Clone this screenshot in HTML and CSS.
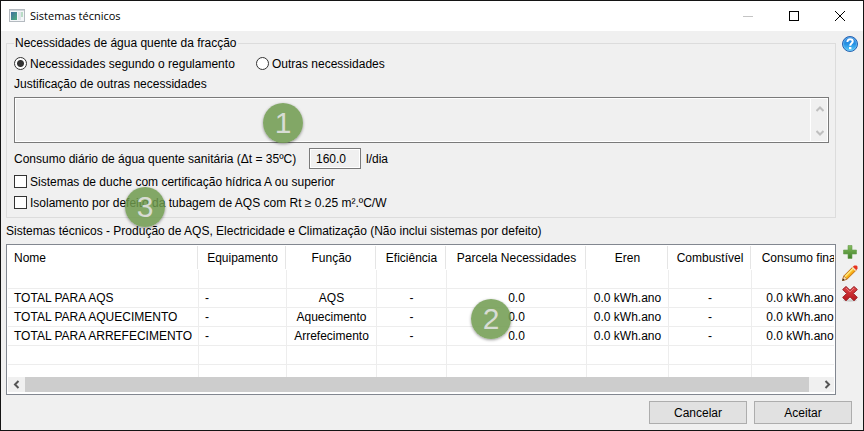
FILE: index.html
```html
<!DOCTYPE html>
<html lang="pt">
<head>
    <meta charset="UTF-8">
    <meta name="viewport" content="width=device-width, initial-scale=1.0">
    <title>Sistemas técnicos</title>
    <link rel="stylesheet" href="styles.css">
</head>
<body>
    <div class="window">
        <header class="titlebar">
            <svg class="app-icon" width="16" height="14" viewBox="0 0 16 14">
                <defs>
                    <linearGradient id="screen" x1="0" y1="0" x2="1" y2="1">
                        <stop offset="0" stop-color="#3f6f9f"/>
                        <stop offset="1" stop-color="#4fae7c"/>
                    </linearGradient>
                </defs>
                <rect x="0.5" y="0.5" width="15" height="12" fill="#f4f6f8" stroke="#b4bac0"/>
                <rect x="1" y="1" width="14" height="1" fill="#cfd5da"/>
                <rect x="2" y="3" width="6" height="8" fill="url(#screen)"/>
                <rect x="9" y="3" width="3" height="8" fill="#dfe5ea"/>
                <rect x="12" y="3" width="2" height="5" fill="#b9dcc6"/>
            </svg>
            <h1>Sistemas técnicos</h1>
            <div class="window-controls">
                <button type="button" aria-label="Minimizar" disabled>
                    <svg width="10" height="10" viewBox="0 0 10 10"><path d="M0 5.5h10" stroke="#c4c4c4"/></svg>
                </button>
                <button type="button" aria-label="Maximizar">
                    <svg width="10" height="10" viewBox="0 0 10 10"><rect x="0.5" y="0.5" width="9" height="9" fill="none" stroke="#000"/></svg>
                </button>
                <button type="button" aria-label="Fechar">
                    <svg width="10" height="10" viewBox="0 0 10 10"><path d="M0 0l10 10M10 0L0 10" stroke="#000"/></svg>
                </button>
            </div>
        </header>

        <main class="content">
            <fieldset class="group">
                <legend>Necessidades de água quente da fracção</legend>
                <div class="option-row">
                    <label><input type="radio" name="necessidades" checked>Necessidades segundo o regulamento</label>
                    <label><input type="radio" name="necessidades">Outras necessidades</label>
                </div>
                <label class="field-label" for="justificacao">Justificação de outras necessidades</label>
                <div class="memo">
                    <textarea id="justificacao" readonly></textarea>
                    <div class="memo-scroll">
                        <svg width="8" height="6" viewBox="0 0 8 6"><path d="M0.5 5L4 1.5L7.5 5" fill="none" stroke="#bfbfbf" stroke-width="2"/></svg>
                        <svg width="8" height="6" viewBox="0 0 8 6"><path d="M0.5 1L4 4.5L7.5 1" fill="none" stroke="#bfbfbf" stroke-width="2"/></svg>
                    </div>
                    <span class="badge badge-1">1</span>
                </div>
                <div class="consumo-row">
                    <label for="consumo">Consumo diário de água quente sanitária (Δt = 35ºC)</label>
                    <input type="text" id="consumo" value="160.0" readonly>
                    <span>l/dia</span>
                </div>
                <label class="check-row"><input type="checkbox">Sistemas de duche com certificação hídrica A ou superior</label>
                <label class="check-row"><input type="checkbox">Isolamento por defeito da tubagem de AQS com Rt ≥ 0.25 m².ºC/W</label>
                <span class="badge badge-3">3</span>
            </fieldset>

            <div class="side">
                <button type="button" class="icon-button" aria-label="Ajuda">
                    <svg width="16" height="16" viewBox="0 0 16 16">
                        <defs>
                            <linearGradient id="help" x1="0" y1="0" x2="0" y2="1">
                                <stop offset="0" stop-color="#2f7fd6"/>
                                <stop offset="0.5" stop-color="#2490e4"/>
                                <stop offset="1" stop-color="#5fd0fb"/>
                            </linearGradient>
                        </defs>
                        <circle cx="8" cy="8" r="7.5" fill="url(#help)" stroke="#2a62b0"/>
                        <circle cx="8" cy="8" r="6.5" fill="none" stroke="#7cc6f4" stroke-opacity="0.6"/>
                        <path d="M5.4 6C5.4 4.2 6.5 3.3 8.1 3.3C9.7 3.3 10.7 4.2 10.7 5.5C10.7 7.3 8.2 7.4 8.2 9.8" fill="none" stroke="#fff" stroke-width="2"/>
                        <rect x="7" y="11" width="2.4" height="2.2" fill="#fff"/>
                    </svg>
                </button>
            </div>

            <section class="systems">
                <h2>Sistemas técnicos - Produção de AQS, Electricidade e Climatização (Não inclui sistemas por defeito)</h2>
                <div class="grid-box">
                    <div class="grid-view">
                        <table>
                            <colgroup>
                                <col class="col-nome">
                                <col class="col-equipamento">
                                <col class="col-funcao">
                                <col class="col-eficiencia">
                                <col class="col-parcela">
                                <col class="col-eren">
                                <col class="col-combustivel">
                                <col class="col-consumo">
                            </colgroup>
                            <thead>
                                <tr>
                                    <th class="left">Nome</th>
                                    <th>Equipamento</th>
                                    <th>Função</th>
                                    <th>Eficiência</th>
                                    <th>Parcela Necessidades</th>
                                    <th>Eren</th>
                                    <th>Combustível</th>
                                    <th>Consumo final</th>
                                </tr>
                            </thead>
                            <tbody>
                                <tr><td></td><td></td><td></td><td></td><td></td><td></td><td></td><td></td></tr>
                                <tr>
                                    <td class="left">TOTAL PARA AQS</td>
                                    <td class="left">-</td>
                                    <td>AQS</td>
                                    <td>-</td>
                                    <td>0.0</td>
                                    <td>0.0 kWh.ano</td>
                                    <td>-</td>
                                    <td>0.0 kWh.ano</td>
                                </tr>
                                <tr>
                                    <td class="left">TOTAL PARA AQUECIMENTO</td>
                                    <td class="left">-</td>
                                    <td>Aquecimento</td>
                                    <td>-</td>
                                    <td>0.0</td>
                                    <td>0.0 kWh.ano</td>
                                    <td>-</td>
                                    <td>0.0 kWh.ano</td>
                                </tr>
                                <tr>
                                    <td class="left">TOTAL PARA ARREFECIMENTO</td>
                                    <td class="left">-</td>
                                    <td>Arrefecimento</td>
                                    <td>-</td>
                                    <td>0.0</td>
                                    <td>0.0 kWh.ano</td>
                                    <td>-</td>
                                    <td>0.0 kWh.ano</td>
                                </tr>
                                <tr><td></td><td></td><td></td><td></td><td></td><td></td><td></td><td></td></tr>
                                <tr><td></td><td></td><td></td><td></td><td></td><td></td><td></td><td></td></tr>
                            </tbody>
                        </table>
                    </div>
                    <div class="scrollbar">
                        <svg width="17" height="15" viewBox="0 0 17 15"><path d="M10.5 4L7 7.5L10.5 11" fill="none" stroke="#555" stroke-width="2"/></svg>
                        <div class="scroll-track"><div class="scroll-thumb"></div></div>
                        <svg width="17" height="15" viewBox="0 0 17 15"><path d="M8.500 4L12 7.500L8.500 11" fill="none" stroke="#555" stroke-width="2"/></svg>
                    </div>
                    <span class="badge badge-2">2</span>
                </div>
            </section>

            <div class="side side-tools">
                <button type="button" class="icon-button" aria-label="Adicionar">
                    <svg width="16" height="16" viewBox="0 0 16 16">
                        <defs>
                            <linearGradient id="plus" x1="0" y1="0" x2="0" y2="1">
                                <stop offset="0" stop-color="#86bd5f"/>
                                <stop offset="1" stop-color="#3f7f28"/>
                            </linearGradient>
                        </defs>
                        <path d="M6 1.5h4v4.500h4.500v4H10v4.500H6V10H1.500V6H6z" fill="url(#plus)" stroke="#6a9e50" stroke-width="0.6"/>
                    </svg>
                </button>
                <button type="button" class="icon-button" aria-label="Editar">
                    <svg width="16" height="16" viewBox="0 0 16 16">
                        <path d="M0.500 15.500L1.800 11L11 1.800L14.300 5L5 14.200z" fill="#fbc02d" stroke="#b9640f"/>
                        <path d="M3 11.500L11.300 3.200" stroke="#ffe67a" stroke-width="1.400"/>
                        <path d="M4.600 13.200L13 4.800" stroke="#f5a312" stroke-width="1.200"/>
                        <path d="M0.500 15.500L1.800 11L5 14.200z" fill="#f5deb8" stroke="#a9662a" stroke-width="0.600"/>
                        <path d="M0.300 15.700L1 13.500L2.500 15z" fill="#222"/>
                        <path d="M10 2.800L13.200 6L14.200 5L11 1.800z" fill="#f3e6d8"/>
                        <path d="M11 1.800L12.300 0.500H14.500L15.500 1.500V3.700L14.300 5z" fill="#e8321e"/>
                    </svg>
                </button>
                <button type="button" class="icon-button" aria-label="Eliminar">
                    <svg width="16" height="16" viewBox="0 0 16 16">
                        <defs>
                            <linearGradient id="cross" x1="0" y1="0" x2="0" y2="1">
                                <stop offset="0" stop-color="#e0484a"/>
                                <stop offset="1" stop-color="#b5161c"/>
                            </linearGradient>
                        </defs>
                        <ellipse cx="8" cy="14.500" rx="7" ry="1.200" fill="#000" fill-opacity="0.150"/>
                        <path d="M4 0.500L8 4.300L12 0.500L15.300 3.500L11.300 7.500L15.300 11.500L12 14.700L8 10.800L4 14.700L0.700 11.500L4.700 7.500L0.700 3.500z" fill="url(#cross)" stroke="#971a1e"/>
                        <path d="M4 2L8 5.900L12 2" fill="none" stroke="#ef8f8f" stroke-width="0.800"/>
                    </svg>
                </button>
            </div>
        </main>

        <footer class="actions">
            <button type="button" class="button">Cancelar</button>
            <button type="button" class="button">Aceitar</button>
        </footer>
    </div>
</body>
</html>
```

FILE: styles.css
```css
:root {
    --background: #f0f0f0;
    --text: #000000;
    --border: #7a7a7a;
    --line: #dcdcdc;
    --grid-line: #ededed;
    --badge: rgba(111, 154, 77, 0.85);
}
* {
    box-sizing: border-box;
}
body {
    font-family: "Liberation Sans", Arial, sans-serif;
    font-size: 12px;
    line-height: 16px;
    color: var(--text);
    margin: 0;
}
button, input, textarea {
    font: inherit;
    color: inherit;
    margin: 0;
}
.window {
    min-height: 100vh;
    background-color: var(--background);
    border: 1px solid #141414;
}

/* Title bar */
.titlebar {
    display: flex;
    align-items: center;
    height: 30px;
    padding-left: 8px;
    background-color: #ffffff;
}
.titlebar h1 {
    flex: 1;
    margin: 0 0 0 5px;
    font-family: "Open Sans", "Segoe UI", sans-serif;
    font-size: 11px;
    font-weight: 400;
}
.window-controls {
    display: flex;
}
.window-controls button {
    display: flex;
    align-items: center;
    justify-content: center;
    width: 46px;
    height: 30px;
    padding: 0;
    border: none;
    background: none;
}
.window-controls svg {
    shape-rendering: crispEdges;
}

/* Main area: groups on the left, tool icons on the right */
.content {
    display: grid;
    grid-template-columns: minmax(0, 1fr) 16px;
    column-gap: 6px;
    padding: 5px 5px 0;
}
.group {
    position: relative;
    min-width: 0;
    margin: 0;
    padding: 3px 6px 4px 7px;
    border: 1px solid var(--line);
}
.group legend {
    padding: 0 1px;
    line-height: 14px;
}
.option-row {
    display: flex;
    gap: 10px;
}
.option-row label {
    min-width: 232px;
}
.option-row label, .check-row {
    display: flex;
    align-items: center;
    gap: 3px;
    height: 21px;
}
input[type="radio"], input[type="checkbox"] {
    appearance: none;
    width: 13px;
    height: 13px;
    border: 1px solid #333333;
    background-color: #ffffff;
}
input[type="radio"] {
    border-radius: 50%;
}
input[type="radio"]:checked {
    background-image: radial-gradient(circle, #333333 3px, transparent 4px);
}
input[type="checkbox"]:checked {
    background-color: #333333;
}
.field-label {
    display: block;
    margin: 2px 0 5px;
}
.memo {
    position: relative;
    display: flex;
    height: 46px;
    border: 1px solid var(--border);
    box-shadow: inset 0 0 0 1px #ffffff;
}
.memo textarea {
    flex: 1;
    border: none;
    background: none;
    resize: none;
    outline: none;
}
.memo-scroll {
    display: flex;
    flex-direction: column;
    align-items: center;
    justify-content: space-between;
    width: 18px;
    padding: 8px 0 6px;
    border-left: 1px solid #ffffff;
}
.consumo-row {
    display: flex;
    align-items: center;
    gap: 5px;
    margin: 5px 0 2px;
}
.consumo-row label {
    min-width: 290px;
}
.consumo-row input {
    width: 52px;
    height: 21px;
    padding: 0 6px;
    border: 1px solid var(--border);
    background-color: var(--background);
    box-shadow: inset 0 0 0 1px #ffffff;
}

/* Systems table */
.systems h2 {
    margin: 5px 0;
    font-size: 12px;
    font-weight: 400;
}
.grid-box {
    position: relative;
    height: 151px;
    padding: 1px;
    border: 1px solid #828790;
    background-color: #ffffff;
}
.grid-view {
    height: 131px;
    overflow: hidden;
}
table {
    table-layout: fixed;
    width: 841px;
    border-collapse: separate;
    border-spacing: 0;
}
th, td {
    height: 19px;
    padding: 0;
    border-right: 1px solid var(--grid-line);
    border-bottom: 1px solid var(--grid-line);
    font-weight: 400;
    text-align: center;
    white-space: nowrap;
}
th {
    height: 24px;
    border-color: transparent;
    box-shadow: inset -1px 0 #e5e5e5;
}
.left {
    padding-left: 6px;
    text-align: left;
}
.col-nome { width: 191px; }
.col-equipamento { width: 88px; }
.col-funcao { width: 90px; }
.col-eficiencia { width: 70px; }
.col-parcela { width: 140px; }
.col-eren { width: 82px; }
.col-combustivel { width: 83px; }
.col-consumo { width: 97px; }
.scrollbar {
    display: flex;
    height: 15px;
    background-color: var(--background);
}
.scroll-track {
    flex: 1;
}
.scroll-thumb {
    width: 99%;
    height: 100%;
    background-color: #cdcdcd;
}

/* Tool icons */
.side-tools {
    display: flex;
    flex-direction: column;
    gap: 5px;
    padding-top: 26px;
}
.icon-button {
    display: block;
    width: 16px;
    height: 16px;
    padding: 0;
    border: none;
    background: none;
}
.icon-button svg {
    display: block;
}

/* Numbered callouts */
.badge {
    position: absolute;
    width: 40px;
    height: 40px;
    border-radius: 50%;
    background-color: var(--badge);
    box-shadow: 0 1px 3px rgba(0, 0, 0, 0.4);
    color: #d8dcd4;
    font-size: 30px;
    line-height: 40px;
    text-align: center;
}
.badge-1 {
    top: 5px;
    left: 248px;
}
.badge-2 {
    top: 54px;
    left: 464px;
}
.badge-3 {
    bottom: -10px;
    left: 118px;
}

/* Dialog buttons */
.actions {
    display: flex;
    justify-content: flex-end;
    gap: 7px;
    padding: 6px 11px 5px;
}
.button {
    width: 98px;
    height: 23px;
    padding: 0;
    border: 1px solid #adadad;
    background-color: #e1e1e1;
}
.button:hover {
    border-color: #0078d7;
    background-color: #e5f1fb;
}
```
